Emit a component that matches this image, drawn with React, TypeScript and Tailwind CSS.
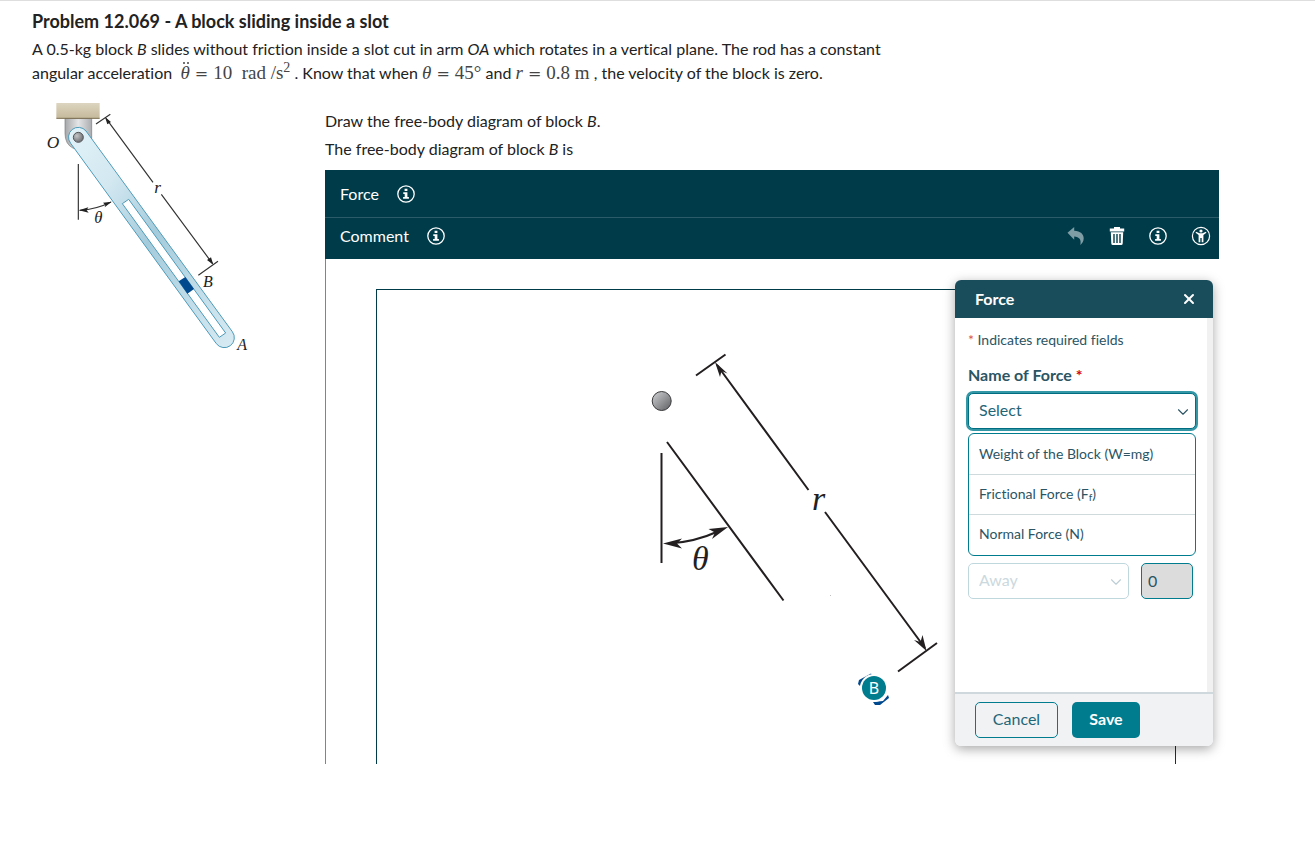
import type { ReactNode } from 'react';
import { ChevronDown, X } from 'lucide-react';

const forces = [
  <>Weight of the Block (W=mg)</>,
  <>
    Frictional Force (F<sub className="bottom-[-2px] text-[10px]">f</sub>)
  </>,
  <>Normal Force (N)</>,
];

function MathText({ children }: { children: ReactNode }) {
  return (
    <span className="font-['Liberation_Serif',serif] text-[19px] leading-5 text-[#444]">{children}</span>
  );
}

function Equals() {
  return <span className="mx-[5px] font-['DejaVu_Serif',serif] text-base leading-5">=</span>;
}

// theta with the two dots of a second time derivative
function ThetaDoubleDot() {
  return (
    <span className="relative">
      <i>θ</i>
      <span className="absolute top-0 left-[3px] h-0.5 w-0.5 rounded-full bg-[#444]" />
      <span className="absolute top-0 left-[7px] h-0.5 w-0.5 rounded-full bg-[#444]" />
    </span>
  );
}

function InfoIcon() {
  return (
    <svg viewBox="0 0 18 18" className="h-[18px] w-[18px]" aria-hidden="true">
      <circle cx="9" cy="9" r="8.2" fill="none" stroke="currentColor" strokeWidth="1.3" />
      <path d="M7.6 3.8h2.8v2.3H7.6zM6.3 7.2h4.1v4.7h1.5v1.9H6.1v-1.9h1.6V9H6.3z" fill="currentColor" />
    </svg>
  );
}

function UndoIcon() {
  return (
    <svg viewBox="0 0 18 20" className="h-5 w-[18px]" aria-hidden="true">
      <path d="M.5 6.7 7.2 1v3.7c6.3.4 9.5 3.3 9.5 7.6 0 2.8-1.2 5-3.4 6.7 1.3-5.3-1.1-8.3-6.1-8.5v3.3z" fill="currentColor" />
    </svg>
  );
}

function TrashIcon() {
  return (
    <svg viewBox="0 0 16 20" className="h-5 w-4" aria-hidden="true">
      <path d="M5 2.5V1h6v1.5h4.2v3H.8v-3z" fill="currentColor" />
      <path
        fillRule="evenodd"
        d="M1.8 6.2h12.4l-.5 11.300q-.1 1.5-1.5 1.5H3.800q-1.4 0-1.5-1.5zM4.3 8v9h1.4V8zM7.3 8v9h1.4V8zM10.3 8v9h1.4V8z"
        fill="currentColor"
      />
    </svg>
  );
}

function AccessibilityIcon() {
  return (
    <svg viewBox="0 0 20 20" className="h-5 w-5" aria-hidden="true">
      <circle cx="10" cy="10" r="8.6" fill="none" stroke="currentColor" strokeWidth="1.2" />
      <circle cx="10" cy="5" r="1.6" fill="currentColor" />
      <path d="M5 5.8 8.5 7.300h3L15 5.800l.4.9-3 2.2V16.200h-1.700v-4.200H9.300v4.200H7.600V8.900l-3-2.200z" fill="currentColor" />
    </svg>
  );
}

function ArmFigure() {
  return (
    <svg viewBox="-9 0 684 795" className="h-[265px] w-[228px]" role="img" aria-label="Slotted arm">
      <defs>
        <linearGradient id="beam" x1="0" y1="0" x2="0" y2="1">
          <stop offset="0" stopColor="#ddd5c0" />
          <stop offset="1" stopColor="#c5b99b" />
        </linearGradient>
        <linearGradient id="bracket" x1="0" y1="0" x2="1" y2="0">
          <stop offset="0" stopColor="#a5a7aa" />
          <stop offset="0.5" stopColor="#e4e5e6" />
          <stop offset="1" stopColor="#aaacaf" />
        </linearGradient>
        <linearGradient id="arm" x1="0" y1="0" x2="1" y2="1">
          <stop offset="0" stopColor="#e2f2f9" />
          <stop offset="0.25" stopColor="#d3e8f1" />
          <stop offset="0.5" stopColor="#a5cbdb" />
          <stop offset="0.75" stopColor="#c0dce8" />
          <stop offset="1" stopColor="#d8ebf3" />
        </linearGradient>
        <radialGradient id="pin" cx="0.35" cy="0.35" r="0.7">
          <stop offset="0" stopColor="#c4c5c7" />
          <stop offset="1" stopColor="#696b6e" />
        </radialGradient>
      </defs>
      <path d="M90 70h80v90h-55q-25-12-25-45z" fill="url(#bracket)" stroke="#77797c" strokeWidth="2" />
      <path d="M64 24h130v46H64z" fill="url(#beam)" />
      <path d="M64 70h130" stroke="#7a6d50" strokeWidth="3" />
      <path
        d="M153 108 592 710A29 29 0 0 1 544 746L107 145A29 29 0 0 1 153 108z"
        fill="url(#arm)"
        stroke="#4d9bb9"
        strokeWidth="3"
      />
      <path d="M262 326 281 313 572 714 553 727z" fill="#fff" stroke="#4d9bb9" strokeWidth="3" />
      <path d="M431 559 451 546 477 582 457 596z" fill="#00498f" />
      <circle cx="130" cy="127" r="15" fill="url(#pin)" stroke="#55575a" strokeWidth="3" />
      <g stroke="#333" strokeWidth="3.5" fill="none">
        <path d="M183 87 226 58M490 541 549 499" />
        <path d="M213 70 354 262M379 298 532 505" />
        <path d="M130 207V374M134 346Q185 343 228 321" />
      </g>
      <g fill="#222">
        <path d="M210 66 228 81 217 88zM535 509 516 495 528 487z" />
        <path d="M132 346 160 337 155 346 161 353zM230 320 204 323 211 330 209 337z" />
      </g>
      <g className="font-['Liberation_Serif',serif] italic" fill="#222">
        <text x="35" y="159" fontSize="52">O</text>
        <text x="358" y="293" fontSize="52">r</text>
        <text x="178" y="384" fontSize="50">θ</text>
        <text x="504" y="576" fontSize="48">B</text>
        <text x="607" y="766" fontSize="48">A</text>
      </g>
    </svg>
  );
}

function DiagramFigure() {
  return (
    <svg viewBox="0 0 575 474" className="h-[474px] w-[575px]" role="img" aria-label="Free-body diagram">
      <defs>
        <linearGradient id="bead" x1="0" y1="0" x2="1" y2="1">
          <stop offset="0" stopColor="#d2d3d5" />
          <stop offset="1" stopColor="#5c5e61" />
        </linearGradient>
      </defs>
      <circle cx="284.7" cy="111" r="9.5" fill="url(#bead)" stroke="#3a3a3c" />
      <g stroke="#231f20" strokeWidth="2" fill="none">
        <path d="M319 85.5 348.5 64.5M521 381.5 560 353" />
        <path d="M340 75 431.5 200M448 222 548 358" />
        <path d="M290 152 406.5 310.5M284.5 163V273" />
        <path d="M292 253.5Q318 252 342 241" />
      </g>
      <g fill="#231f20">
        <path d="M338 72 350.5 83.5 344.5 81 343 87zM549.5 361 537 350 543.5 352 545.5 345z" />
        <path d="M286 253.5 305 248.5 300 253.5 305 258.5zM351 237 331.5 239 338 242.5 335 249z" />
      </g>
      <circle cx="453.5" cy="305.5" r="0.5" fill="#aaa" />
      <path
        d="M481 394 482 390 494 383.5 495 385 486 391 483 396zM496 412 506 411 511 405 512 408 503 415 498 415z"
        fill="#00498f"
      />
      <g className="font-['Liberation_Serif',serif] italic" fill="#231f20" fontSize="34">
        <text x="435" y="220">r</text>
        <text x="315" y="280">θ</text>
      </g>
    </svg>
  );
}

function ForceDialog() {
  return (
    <div
      role="dialog"
      aria-labelledby="force-title"
      className="absolute top-[21px] right-1.5 w-[258px] rounded-md bg-white text-[#2b5564] shadow-[0_3px_12px_rgba(0,0,0,0.35)]"
    >
      <div className="flex h-[38px] items-center justify-between rounded-t-md bg-[#1a4d5c] pr-4 pl-5 text-white">
        <h2 id="force-title" className="text-base font-bold">Force</h2>
        <button type="button" aria-label="Close">
          <X className="h-4 w-4" strokeWidth={3} />
        </button>
      </div>

      <div className="flex h-[374px]">
        <form className="flex-1 pt-3 pr-[11px] pl-[13px]">
          <p className="text-sm leading-5">
            <span className="text-[#d9534f]">*</span> Indicates required fields
          </p>
          <label htmlFor="force-name" className="mt-[15px] block text-base leading-5 font-bold">
            Name of Force <span className="text-[#d0021b]">*</span>
          </label>
          <div className="relative mt-2">
            <select
              id="force-name"
              className="h-9 w-full appearance-none rounded-[5px] border border-[#006e80] bg-white px-2.5 pb-0.5 text-base text-[#1f6678] ring-2 ring-[#3397a6]"
            >
              <option>Select</option>
            </select>
            <ChevronDown className="pointer-events-none absolute top-2.5 right-1 h-[18px] w-[18px]" strokeWidth={1.5} />
            <ul
              role="listbox"
              aria-label="Name of Force"
              className="absolute top-10 right-0 left-0 rounded-md border border-[#007c8f] bg-white pt-px text-sm"
            >
              {forces.map((force, i) => (
                <li
                  key={i}
                  role="option"
                  aria-selected={false}
                  className="flex h-10 items-center border-b border-[#cfdadd] px-2.5 pb-0.5 last:border-0"
                >
                  <span>{force}</span>
                </li>
              ))}
            </ul>
          </div>
          <div className="mt-[134px] flex gap-3">
            <div className="relative w-[161px]">
              <select
                aria-label="Direction"
                disabled
                className="h-9 w-full appearance-none rounded-[5px] border border-[#bfd8de] bg-white px-2.5 pb-0.5 text-base text-[#cbd9de] opacity-100"
              >
                <option>Away</option>
              </select>
              <ChevronDown
                className="pointer-events-none absolute top-2.5 right-1 h-[18px] w-[18px] text-[#bccfd5]"
                strokeWidth={1.5}
              />
            </div>
            <input
              aria-label="Angle"
              defaultValue="0"
              className="h-9 w-[52px] rounded-[5px] border border-[#007c8f] bg-[#dcdcdc] px-1.5 pb-0.5 text-base text-[#2b5564]"
            />
          </div>
        </form>
        <div className="w-1.5 bg-[#f1f1f1]" />
      </div>

      <div className="flex gap-3.5 rounded-b-md border-t-2 border-[#cfd9dd] bg-[#f1f2f4] px-5 py-2">
        <button type="button" className="h-9 w-[83px] rounded-[5px] border border-[#007c8f] pb-0.5 text-base text-[#1f6678]">
          Cancel
        </button>
        <button type="button" className="h-9 w-[68px] rounded-[5px] bg-[#007c8f] pb-0.5 text-base font-bold text-white">
          Save
        </button>
      </div>
    </div>
  );
}

export default function App() {
  return (
    <main className="min-h-screen border-t border-[#dedede] bg-white pt-2 pr-24 pl-8 font-['Lato',sans-serif] text-base text-[#222] [font-variant-ligatures:none]">
      <h1 className="text-lg leading-6 font-bold">Problem 12.069 - A block sliding inside a slot</h1>
      <p className="mt-1 max-w-[860px] leading-6">
        A 0.5-kg block <i>B</i> slides without friction inside a slot cut in arm <i>OA</i> which rotates in a
        vertical plane. The rod has a constant
        <br />
        angular acceleration&nbsp;{' '}
        <MathText>
          <ThetaDoubleDot />
          <Equals />
          10 &nbsp;rad /s<sup className="text-sm leading-none">2</sup>
        </MathText>{' '}
        . Know that when{' '}
        <MathText>
          <i>θ</i>
          <Equals />
          45°
        </MathText>{' '}
        and{' '}
        <MathText>
          <i>r</i>
          <Equals />
          0.8 m
        </MathText>{' '}
        , the velocity of the block is zero.
      </p>

      <div className="mt-2.5 flex">
        <div className="w-[293px] shrink-0">
          <ArmFigure />
        </div>

        <section className="min-w-0 flex-1 pt-3.5">
          <p className="leading-6">
            Draw the free-body diagram of block <i>B</i>.
          </p>
          <p className="mt-1 leading-6">
            The free-body diagram of block <i>B</i> is
          </p>

          <div className="mt-[9px] bg-[#003b4a] text-white">
            <div className="flex h-12 items-center gap-[18px] border-b border-[#2b5b68] px-[15px]">
              <button type="button">Force</button>
              <button type="button" aria-label="About forces">
                <InfoIcon />
              </button>
            </div>
            <div className="flex items-center justify-between pt-1.5 pr-2 pb-[11px] pl-[15px]">
              <div className="flex items-center gap-[18px]">
                <button type="button">Comment</button>
                <button type="button" aria-label="About comments">
                  <InfoIcon />
                </button>
              </div>
              <div className="flex items-center gap-6">
                <button type="button" aria-label="Undo" className="text-[#7f9da5]">
                  <UndoIcon />
                </button>
                <button type="button" aria-label="Delete">
                  <TrashIcon />
                </button>
                <button type="button" aria-label="Information">
                  <InfoIcon />
                </button>
                <button type="button" aria-label="Accessibility">
                  <AccessibilityIcon />
                </button>
              </div>
            </div>
          </div>

          <div className="relative border-l border-[#6a8d97] pt-[30px] pr-[43px] pl-[50px]">
            <div className="relative border-x border-t border-[#003b4a]">
              <DiagramFigure />
              <button
                type="button"
                className="absolute top-[386px] left-[485px] h-6 w-6 rounded-full bg-[#007c8f] font-['Noto_Sans',sans-serif] text-base leading-6 text-white ring-2 ring-white"
              >
                B
              </button>
            </div>
            <ForceDialog />
          </div>
        </section>
      </div>
    </main>
  );
}
